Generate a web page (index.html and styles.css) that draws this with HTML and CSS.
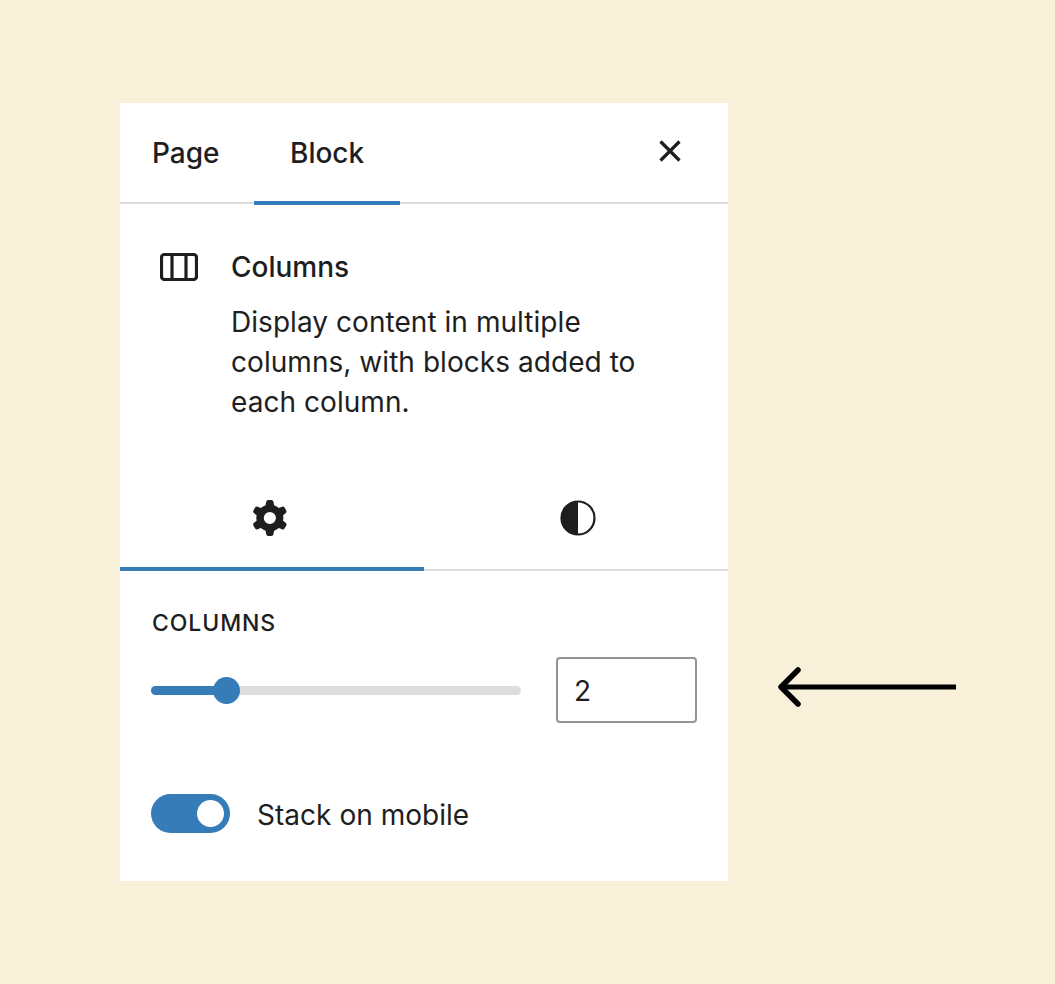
FILE: index.html
```html
<!DOCTYPE html>
<html lang="en">
<head>
<meta charset="utf-8">
<title>Columns block settings</title>
<link rel="stylesheet" href="styles.css">
</head>
<body>
<main class="stage">
  <section class="panel">
    <header class="tabs">
      <div class="tab tab-page">Page</div>
      <div class="tab tab-active">Block</div>
      <button class="close" aria-label="Close">
        <svg width="24" height="24" viewBox="0 0 24 24"><path d="M2.500 2.500 21.500 21.500M21.500 2.500 2.500 21.500" stroke="#1e1e1e" stroke-width="3.200" fill="none"/></svg>
      </button>
    </header>
    <div class="card">
      <svg class="card-icon" width="38" height="28" viewBox="0 0 38 28"><rect x="1.500" y="1.500" width="35" height="25" rx="3" fill="none" stroke="#1e1e1e" stroke-width="3.200"/><path d="M12 2v24M26 2v24" stroke="#1e1e1e" stroke-width="3.200"/></svg>
      <div class="card-body">
        <h2 class="card-title">Columns</h2>
        <p class="card-desc">Display content in multiple columns, with blocks added to each column.</p>
      </div>
    </div>
    <div class="subtabs">
      <div class="subtab subtab-active">
        <svg width="54" height="54" viewBox="0 0 24 24"><path fill="#1e1e1e" fill-rule="evenodd" d="M10.289 4.836A1 1 0 0111.275 4h1.306a1 1 0 01.987.836l.244 1.466c.787.26 1.503.679 2.108 1.218l1.393-.522a1 1 0 011.216.437l.653 1.13a1 1 0 01-.23 1.273l-1.148.944a6.025 6.025 0 010 2.435l1.149.946a1 1 0 01.23 1.272l-.653 1.13a1 1 0 01-1.216.437l-1.394-.522c-.605.54-1.32.958-2.108 1.218l-.244 1.466a1 1 0 01-.987.836h-1.306a1 1 0 01-.986-.836l-.244-1.466a5.995 5.995 0 01-2.108-1.218l-1.394.522a1 1 0 01-1.217-.436l-.653-1.131a1 1 0 01.23-1.272l1.149-.946a6.026 6.026 0 010-2.435l-1.148-.944a1 1 0 01-.23-1.272l.653-1.131a1 1 0 011.217-.437l1.393.522a5.994 5.994 0 012.108-1.218l.244-1.466zM14.629 12a2.700 2.700 0 11-5.400 0 2.700 2.700 0 015.400 0z"/></svg>
      </div>
      <div class="subtab subtab-contrast">
        <svg width="36" height="36" viewBox="0 0 36 36"><circle cx="18" cy="18" r="16.500" fill="none" stroke="#1e1e1e" stroke-width="2.200"/><path d="M18 1.500a16.500 16.500 0 0 0 0 33z" fill="#1e1e1e"/></svg>
      </div>
    </div>
    <div class="controls">
      <div class="label">COLUMNS</div>
      <div class="range-row">
        <div class="slider">
          <div class="track"></div>
          <div class="fill"></div>
          <div class="thumb"></div>
        </div>
        <div class="number">2</div>
      </div>
      <div class="toggle-row">
        <div class="toggle"><span class="knob"></span></div>
        <span class="toggle-label">Stack on mobile</span>
      </div>
    </div>
  </section>
  <svg class="arrow" width="182" height="40" viewBox="0 0 182 40"><path d="M180 20H6" stroke="#000" stroke-width="5" fill="none"/><path d="M22 3 5 20 22 37" stroke="#000" stroke-width="5.500" stroke-linecap="round" stroke-linejoin="round" fill="none"/></svg>
</main>
</body>
</html>
```
FILE: styles.css
```css
* { box-sizing: border-box; }
html, body { margin: 0; height: 100%; }
body {
  background: #f8f0d8;
  color: #1e1e1e;
  font-family: Inter, "Liberation Sans", sans-serif;
}
.stage {
  display: flex;
  align-items: flex-start;
  padding: 103px 0 0 120px;
}
.panel {
  width: 608px;
  height: 778px;
  background: #fff;
  flex: none;
}
.tabs {
  display: flex;
  height: 101px;
  border-bottom: 2px solid #dddddd;
}
.tab {
  height: 102px;
  display: flex;
  align-items: center;
  padding: 0 35px 2px 36px;
  font-size: 28px;
  font-weight: 500;
}
.tab-page { padding-left: 32px; padding-right: 35px; width: 134px; }
.tab-active { border-bottom: 4px solid #357cb8; width: 146px; padding-top: 2px; padding-bottom: 0; }
.close {
  margin-left: auto;
  margin-right: 46px;
  margin-top: 36px;
  width: 24px;
  height: 24px;
  padding: 0;
  border: 0;
  background: none;
  display: block;
}
.close svg { display: block; }
.card {
  display: flex;
  padding: 47px 32px 0 40px;
  height: 265px;
}
.card-icon { flex: none; margin-right: 33px; margin-top: 2px; }
.card-title {
  margin: 0;
  font-size: 28px;
  font-weight: 500;
  line-height: 32px;
}
.card-desc {
  margin: 19px 0 0;
  font-size: 28px;
  letter-spacing: 0.05px;
  line-height: 40px;
  width: 420px;
}
.subtabs {
  display: grid;
  grid-template-columns: 304px 304px;
  height: 102px;
  border-bottom: 2px solid #dddddd;
}
.subtab {
  height: 102px;
  display: flex;
  align-items: center;
  justify-content: center;
  padding-bottom: 2px;
}
.subtab-active { border-bottom: 4px solid #357cb8; padding: 0 4px 0 0; }
.subtab-contrast { padding: 0 0 4px 4px; }
.controls { padding: 38px 31px 0 31px; }
.label {
  font-size: 23px;
  font-weight: 500;
  letter-spacing: 0.9px;
  line-height: 28px;
  padding-left: 1px;
}
.range-row {
  display: flex;
  align-items: center;
  justify-content: space-between;
  margin-top: 20px;
}
.slider { position: relative; width: 370px; height: 28px; }
.track, .fill {
  position: absolute;
  left: 0;
  top: 10px;
  height: 9px;
  border-radius: 5px;
}
.track { width: 100%; background: #dddddd; }
.fill { width: 76px; background: #357cb8; }
.thumb {
  position: absolute;
  left: 62px;
  top: 1px;
  width: 27px;
  height: 27px;
  border-radius: 50%;
  background: #357cb8;
}
.number {
  width: 141px;
  height: 66px;
  border: 2px solid #949494;
  border-radius: 4px;
  padding-left: 16px;
  font-size: 28px;
  line-height: 64px;
}
.toggle-row {
  display: flex;
  align-items: center;
  margin-top: 71px;
}
.toggle {
  width: 79px;
  height: 39px;
  border-radius: 20px;
  background: #357cb8;
  display: flex;
  align-items: center;
  justify-content: flex-end;
  padding-right: 6px;
}
.knob { width: 27px; height: 27px; border-radius: 50%; background: #fff; }
.toggle-label { margin-left: 27px; padding-top: 2px; font-size: 28px; letter-spacing: 0.03px; }
.arrow { flex: none; margin: 564px 0 0 48px; }
```
